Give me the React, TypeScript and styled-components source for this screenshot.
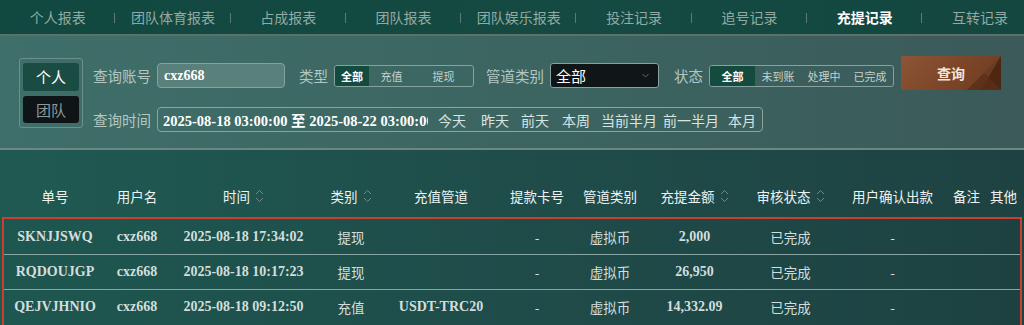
import React from 'react';
import styled, { createGlobalStyle } from 'styled-components';

const GlobalStyle = createGlobalStyle`
  html, body {
    margin: 0;
    padding: 0;
    background: #1e4a46;
    font-family: "Noto Sans CJK SC", "Noto Sans", sans-serif;
  }
  * { box-sizing: border-box; }
`;

const SERIF = '"Liberation Serif", "Noto Sans CJK SC", serif';

const Page = styled.div`
  width: 1024px;
  height: 325px;
  overflow: hidden;
  display: flex;
  flex-direction: column;
`;

/* ---------- top tabs ---------- */

const TabBar = styled.nav`
  height: 36px;
  display: flex;
  background: linear-gradient(90deg, #11483f 0%, #144a41 60%, #134740 100%);
  border-bottom: 2px solid #5e6f6c;
  position: relative;
  overflow: hidden;
`;

const TabUnderline = styled.div`
  position: absolute;
  left: 0;
  bottom: -2px;
  height: 2px;
  width: 828px;
  background: #c3a767;
`;

const Tab = styled.div<{ $active?: boolean }>`
  flex: 0 0 115.3px;
  display: flex;
  align-items: center;
  justify-content: center;
  position: relative;
  font-size: 14px;
  color: ${(p) => (p.$active ? '#ffffff' : '#93aaa4')};
  font-weight: ${(p) => (p.$active ? 700 : 400)};
  padding-bottom: 1px;

  &::after {
    content: '';
    position: absolute;
    right: 0;
    top: 13px;
    width: 1px;
    height: 10px;
    background: #5b7c75;
  }
`;

/* ---------- filter panel ---------- */

const Filter = styled.section`
  height: 114px;
  display: flex;
  align-items: flex-start;
  gap: 10px;
  padding: 22px 0 0 19px;
  background: linear-gradient(90deg, #3f6f6a 0%, #3c6561 50%, #3b5a59 100%);
  border-bottom: 2px solid #6b8683;
`;

const ScopeBox = styled.div`
  width: 64px;
  height: 70px;
  border: 1px solid #6f8f8b;
  border-radius: 3px;
  padding: 4px 3px;
  display: flex;
  flex-direction: column;
  gap: 5px;
`;

const ScopeBtn = styled.div<{ $active?: boolean }>`
  height: 28px;
  border-radius: 3px;
  display: flex;
  align-items: center;
  justify-content: center;
  font-size: 15px;
  color: ${(p) => (p.$active ? '#ffffff' : '#8e9a99')};
  background: ${(p) => (p.$active ? '#1b4c43' : '#0f1416')};
`;

const Fields = styled.div`
  display: flex;
  flex-direction: column;
  gap: 19px;
  padding-top: 5px;
`;

const Line = styled.div`
  display: flex;
  align-items: center;
  height: 25px;
`;

const Label = styled.span<{ $gap?: number }>`
  font-size: 14.5px;
  color: #b2c7c3;
  margin-right: 6px;
  margin-left: ${(p) => p.$gap ?? 0}px;
  white-space: nowrap;
`;

const TextInput = styled.input`
  width: 128px;
  height: 25px;
  border: 1px solid #86a19e;
  border-radius: 4px;
  background: #5a807c;
  color: #ffffff;
  font-family: ${SERIF};
  font-weight: 700;
  font-size: 14px;
  padding: 0 0 0 6px;
  outline: none;
`;

const Segmented = styled.div`
  display: flex;
  height: 22px;
  border: 1px solid #86a19e;
  border-radius: 3px;
  overflow: hidden;
`;

const Seg = styled.div<{ $active?: boolean; $w: number }>`
  width: ${(p) => p.$w}px;
  display: flex;
  align-items: center;
  justify-content: center;
  font-size: 11px;
  color: ${(p) => (p.$active ? '#ffffff' : '#c2d2cf')};
  font-weight: ${(p) => (p.$active ? 700 : 400)};
  background: ${(p) => (p.$active ? '#134b3f' : 'transparent')};
`;

const Select = styled.div`
  width: 109px;
  height: 25px;
  border: 1px solid #8aa19e;
  border-radius: 3px;
  background: #101517;
  color: #ffffff;
  font-size: 15px;
  display: flex;
  align-items: center;
  justify-content: space-between;
  padding: 0 8px 0 5px;
`;

const Chevron = styled.svg`
  width: 9px;
  height: 9px;
`;

const QueryBtn = styled.div`
  margin-left: 7px;
  margin-top: -5px;
  width: 100px;
  height: 34px;
  position: relative;
  overflow: hidden;
  background: linear-gradient(135deg, #8c5536 0%, #7c4528 55%, #6b3a20 100%);
  color: #f3e4da;
  font-size: 14px;
  font-weight: 700;
  display: flex;
  align-items: center;
  justify-content: center;
`;

const BtnDeco = styled.svg`
  position: absolute;
  right: 0;
  top: 0;
  width: 34px;
  height: 34px;
`;

const DateBox = styled.div`
  width: 606px;
  height: 25px;
  border: 1px solid #8aa5a1;
  border-radius: 4px;
  display: flex;
  align-items: center;
  padding-left: 5px;
  overflow: hidden;
`;

const DateInput = styled.input`
  width: 265px;
  height: 22px;
  border: none;
  background: transparent;
  padding: 0;
  outline: none;
  color: #ffffff;
  font-family: ${SERIF};
  font-weight: 700;
  font-size: 14.5px;
`;

const Quick = styled.span<{ $ml: number }>`
  margin-left: ${(p) => p.$ml}px;
  font-size: 14px;
  color: #d9e4e2;
  white-space: nowrap;
`;

/* ---------- table ---------- */

const TableArea = styled.section`
  flex: 1;
  display: flex;
  flex-direction: column;
  padding-top: 29px;
  background: linear-gradient(90deg, #1f5a52 0%, #1f4d4a 50%, #1e4242 100%);
`;

// column edges chosen so each column's centre sits on the reference's text centre
const COLS = '82px 82px 131px 84px 96px 96px 50px 119px 73px 131px 17px 57px';

const HeadRow = styled.div`
  display: grid;
  grid-template-columns: ${COLS};
  padding-left: 14px;
  height: 34px;
  align-items: center;
`;

const HeadCell = styled.div`
  display: flex;
  align-items: center;
  justify-content: center;
  gap: 5px;
  font-size: 13.5px;
  color: #eef3f2;
  white-space: nowrap;
`;

const SortIcon = styled.svg`
  width: 9px;
  height: 16px;
  flex: none;
`;

const Body = styled.div`
  margin: 4px 2px 0 2px;
  border: 2px solid #c9402f;
  border-bottom: none;
  flex: 1;
  display: flex;
  flex-direction: column;
  background: linear-gradient(90deg, #1e5750 0%, #1f4b49 55%, #1d4141 100%);
`;

const Row = styled.div`
  display: grid;
  grid-template-columns: ${COLS};
  padding-left: 10px;
  height: 35px;
  align-items: center;
  & + & {
    border-top: 1px solid #87a5a2;
  }
`;

const Cell = styled.div<{ $latin?: boolean }>`
  display: flex;
  justify-content: center;
  white-space: nowrap;
  color: #d3dedc;
  font-size: ${(p) => (p.$latin ? '14px' : '13.5px')};
  font-family: ${(p) => (p.$latin ? SERIF : 'inherit')};
  font-weight: ${(p) => (p.$latin ? 700 : 400)};
`;

const tabs = [
  '个人报表',
  '团队体育报表',
  '占成报表',
  '团队报表',
  '团队娱乐报表',
  '投注记录',
  '追号记录',
  '充提记录',
  '互转记录',
];

const headers: { label: string; sort?: boolean }[] = [
  { label: '单号' },
  { label: '用户名' },
  { label: '时间', sort: true },
  { label: '类别', sort: true },
  { label: '充值管道' },
  { label: '提款卡号' },
  { label: '管道类别' },
  { label: '充提金额', sort: true },
  { label: '审核状态', sort: true },
  { label: '用户确认出款' },
  { label: '备注' },
  { label: '其他' },
];

const rows = [
  { id: 'SKNJJSWQ', time: '2025-08-18 17:34:02', kind: '提现', channel: '', amount: '2,000' },
  { id: 'RQDOUJGP', time: '2025-08-18 10:17:23', kind: '提现', channel: '', amount: '26,950' },
  { id: 'QEJVJHNIO', time: '2025-08-18 09:12:50', kind: '充值', channel: 'USDT-TRC20', amount: '14,332.09' },
];

const Sort = () => (
  <SortIcon viewBox="0 0 9 16">
    <path d="M1 6 L4.5 2.5 L8 6" fill="none" stroke="#6f8c88" strokeWidth="1" />
    <path d="M1 10 L4.5 13.5 L8 10" fill="none" stroke="#6f8c88" strokeWidth="1" />
  </SortIcon>
);

const App: React.FC = () => (
  <Page>
    <GlobalStyle />
    <TabBar>
      {tabs.map((t) => (
        <Tab key={t} $active={t === '充提记录'}>
          {t}
        </Tab>
      ))}
      <TabUnderline />
    </TabBar>

    <Filter>
      <ScopeBox>
        <ScopeBtn $active>个人</ScopeBtn>
        <ScopeBtn>团队</ScopeBtn>
      </ScopeBox>
      <Fields>
        <Line>
          <Label>查询账号</Label>
          <TextInput readOnly value="cxz668" />
          <Label $gap={14}>类型</Label>
          <Segmented>
            <Seg $w={34} $active>全部</Seg>
            <Seg $w={45}>充值</Seg>
            <Seg $w={59}>提现</Seg>
          </Segmented>
          <Label $gap={12}>管道类别</Label>
          <Select>
            <span>全部</span>
            <Chevron viewBox="0 0 9 9">
              <path d="M1.5 3 L4.5 6 L7.5 3" fill="none" stroke="#5f6a6c" strokeWidth="1" />
            </Chevron>
          </Select>
          <Label $gap={15}>状态</Label>
          <Segmented>
            <Seg $w={45} $active>全部</Seg>
            <Seg $w={46}>未到账</Seg>
            <Seg $w={46}>处理中</Seg>
            <Seg $w={46}>已完成</Seg>
          </Segmented>
          <QueryBtn>
            查询
            <BtnDeco viewBox="0 0 34 34">
              <polygon points="34,0 34,34 0,34" fill="#6a3a21" />
              <polygon points="34,0 34,34 14,34" fill="#4e2712" />
              <polygon points="0,34 17,17 34,34" fill="#5b2f18" opacity="0.8" />
            </BtnDeco>
          </QueryBtn>
        </Line>
        <Line>
          <Label>查询时间</Label>
          <DateBox>
            <DateInput readOnly value="2025-08-18 03:00:00 至 2025-08-22 03:00:00" />
            <Quick $ml={10}>今天</Quick>
            <Quick $ml={15}>昨天</Quick>
            <Quick $ml={12}>前天</Quick>
            <Quick $ml={13}>本周</Quick>
            <Quick $ml={11}>当前半月</Quick>
            <Quick $ml={6}>前一半月</Quick>
            <Quick $ml={9}>本月</Quick>
          </DateBox>
        </Line>
      </Fields>
    </Filter>

    <TableArea>
      <HeadRow>
        {headers.map((h) => (
          <HeadCell key={h.label}>
            {h.label}
            {h.sort && <Sort />}
          </HeadCell>
        ))}
      </HeadRow>
      <Body>
        {rows.map((r) => (
          <Row key={r.id}>
            <Cell $latin>{r.id}</Cell>
            <Cell $latin>cxz668</Cell>
            <Cell $latin>{r.time}</Cell>
            <Cell>{r.kind}</Cell>
            <Cell $latin>{r.channel}</Cell>
            <Cell>-</Cell>
            <Cell>虚拟币</Cell>
            <Cell $latin>{r.amount}</Cell>
            <Cell>已完成</Cell>
            <Cell>-</Cell>
            <Cell />
            <Cell />
          </Row>
        ))}
      </Body>
    </TableArea>
  </Page>
);

export default App;
